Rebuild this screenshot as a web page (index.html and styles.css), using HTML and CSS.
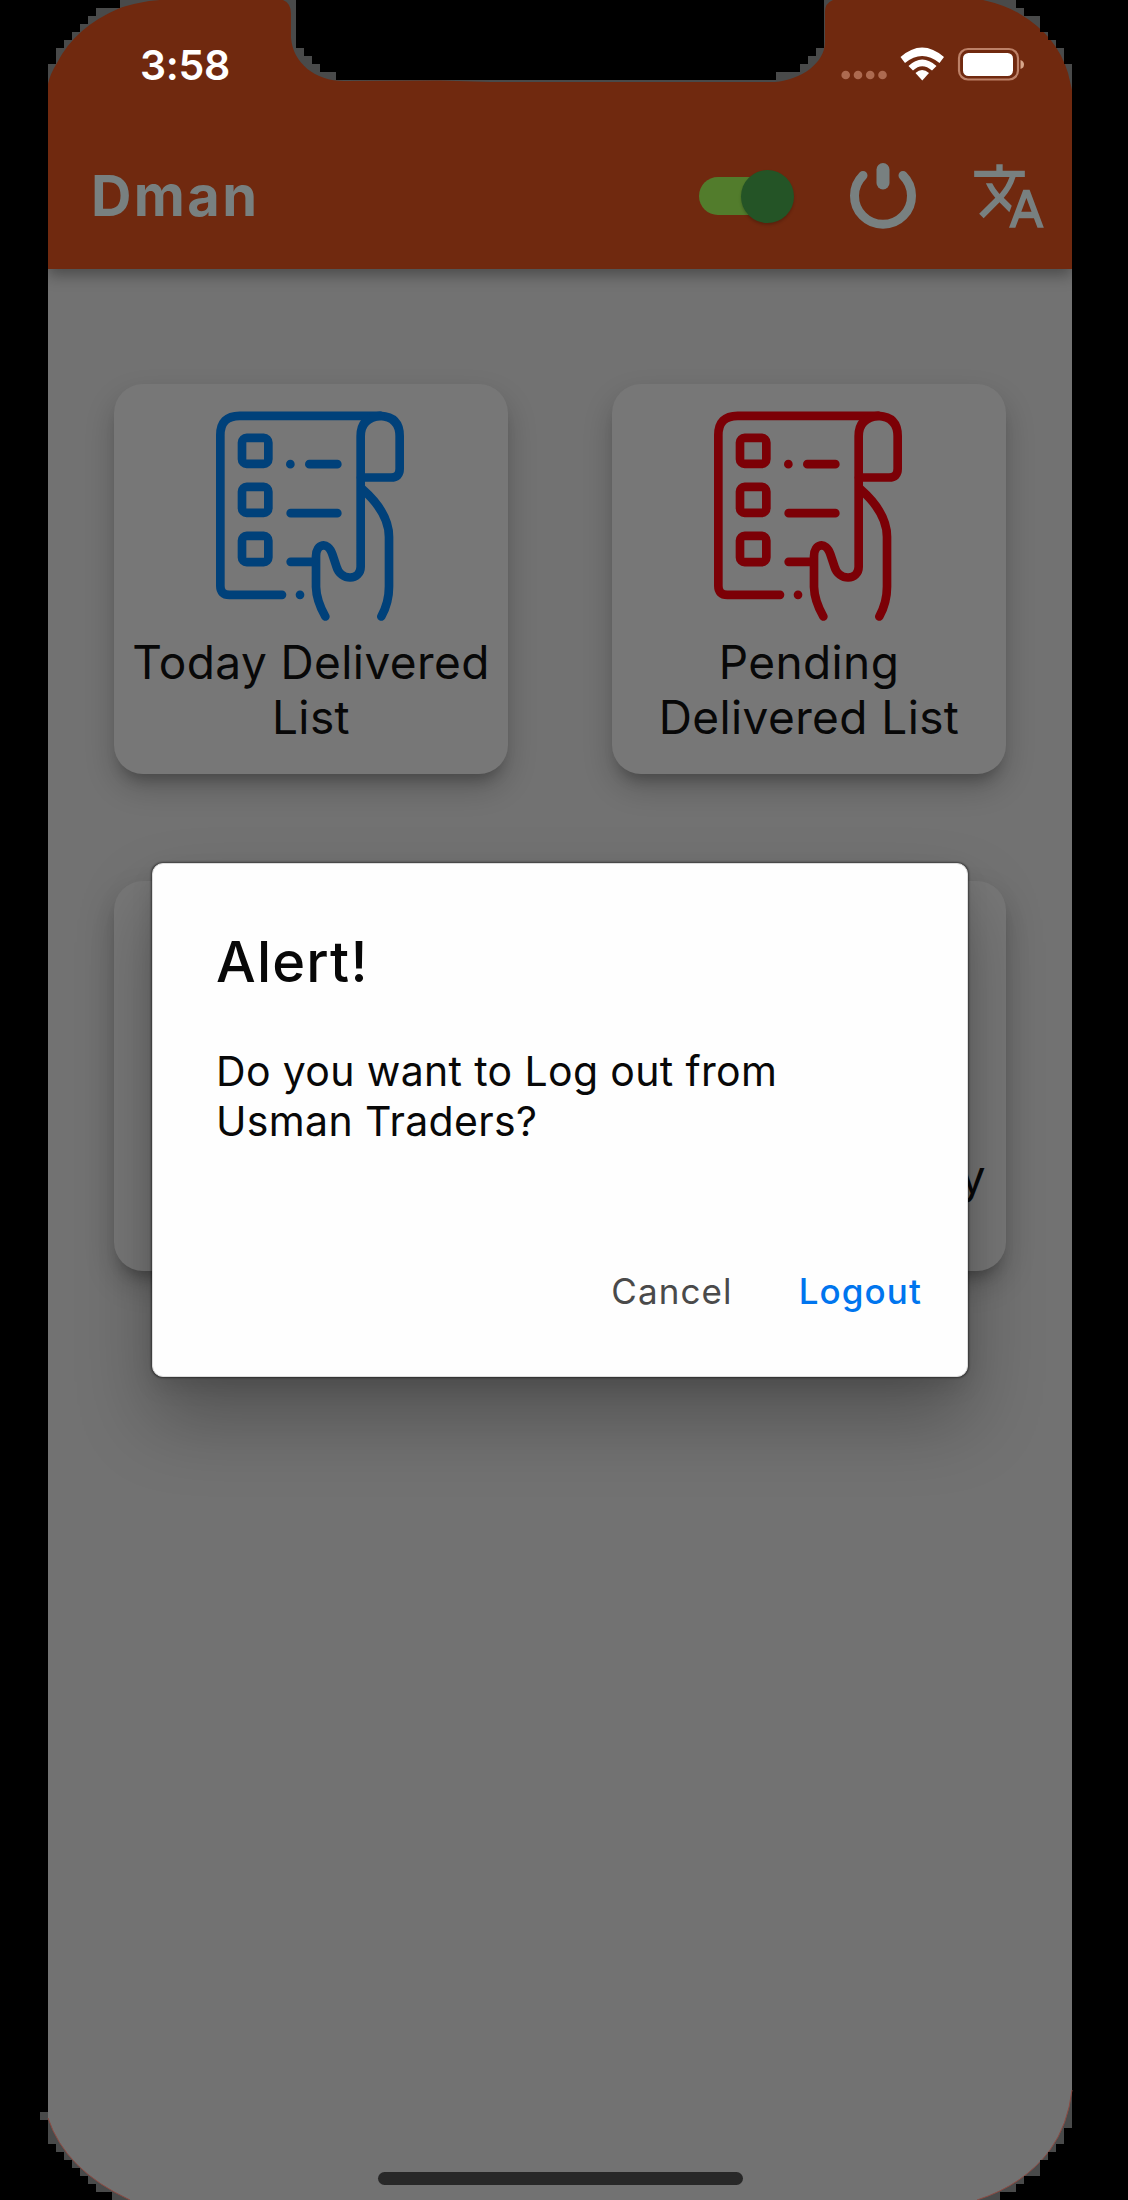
FILE: index.html
```html
<!DOCTYPE html>
<html lang="en">
<head>
<meta charset="utf-8">
<title>Dman</title>
<link rel="stylesheet" href="styles.css">
</head>
<body>
<svg class="defs" width="0" height="0">
  <symbol id="list" viewBox="380 150 570 635">
    <g fill="none" stroke="currentColor" stroke-width="26" stroke-linecap="round" stroke-linejoin="round">
      <path d="M578 704H420Q393 704 393 677V225Q393 167 451 167H873Q931 170 931 228V326Q931 352 905 352H815"/>
      <path d="M873 167Q814 172 814 228V620C814 661 755 665 741 618L729 582C715 541 680 552 680 588V680Q681 721 708 769"/>
      <path d="M818 386Q899 457 899 530V680Q899 728 876 769"/>
      <rect x="458" y="233" width="79" height="78" rx="14"/>
      <rect x="458" y="380" width="79" height="78" rx="14"/>
      <rect x="458" y="527" width="79" height="79" rx="14"/>
      <path d="M603 312h.1M660 312h84M604 459h140M604 605h70M632 704h.1"/>
    </g>
  </symbol>
</svg>
<div class="phone">
  <header class="header">
    <div class="status">
      <span class="time">3:58</span>
      <svg class="signals" width="180" height="36" viewBox="841 46 180 36">
        <g fill="#ad6a50"><circle cx="845.7" cy="75" r="4.3"/><circle cx="858" cy="75" r="4.3"/><circle cx="870.2" cy="75" r="4.3"/><circle cx="882.5" cy="75" r="4.3"/></g>
        <g fill="#fff">
          <path d="M900.5 57Q922 38 944 57L939.5 63Q922 49 905 63Z"/>
          <path d="M908.5 66Q922 53 936.500 66L932 70.500Q922 62 913 70.500Z"/>
          <path d="M915.500 73Q922 67 929 73L922.300 80.500Z"/>
        </g>
        <rect x="959" y="49" width="59" height="30.500" rx="9" fill="none" stroke="#bd8168" stroke-width="2.200"/>
        <rect x="963" y="53" width="50" height="23" rx="5.500" fill="#fff"/>
        <path d="M1020.500 60Q1024 61 1024 64.500T1020.500 69Z" fill="#d6a58a"/>
      </svg>
    </div>
    <div class="appbar">
      <h1 class="title">Dman</h1>
      <div class="toggle"><span class="thumb"></span></div>
      <svg class="power" width="68" height="68" viewBox="849 162 68 68" fill="none" stroke="#788080" stroke-linecap="round">
        <path d="M863 175.500A28.500 28.500 0 1 0 903 175.500" stroke-width="9"/>
        <path d="M883 169.500V183" stroke-width="13"/>
      </svg>
      <svg class="translate" width="76" height="76" viewBox="0 0 24 24" fill="#788080"><path d="M12.870 15.070l-2.540-2.510.03-.03A17.520 17.520 0 0 0 14.070 6H17V4h-7V2H8v2H1v1.990h11.170C11.500 7.920 10.440 9.750 9 11.350 8.070 10.320 7.300 9.190 6.690 8h-2c.73 1.630 1.730 3.170 2.980 4.560l-5.090 5.020L4 19l5-5 3.110 3.110.76-2.040zM18.500 10h-2L12 22h2l1.120-3h4.750L21 22h2l-4.500-12zm-2.620 7l1.620-4.330L19.120 17h-3.240z"/></svg>
    </div>
  </header>
  <main class="grid">
    <section class="card"><svg class="icon blue"><use href="#list"/></svg><p class="label">Today Delivered<br>List</p></section>
    <section class="card"><svg class="icon red"><use href="#list"/></svg><p class="label">Pending<br>Delivered List</p></section>
    <section class="card"></section>
    <section class="card end"><p class="label">y</p></section>
  </main>
  <div class="home"></div>

  <div class="dialog" role="dialog">
    <h2 class="alert">Alert!</h2>
    <p class="message">Do you want to Log out from<br>Usman Traders?</p>
    <div class="actions"><span class="cancel">Cancel</span><span class="logout">Logout</span></div>
  </div>

  <svg class="bezel" width="1040" height="2200" viewBox="40 0 1040 2200">
    <g fill="#494a4a">
      <path d="M48 0H160C145 1 132 4 120 8Q75 27 57 63Q50 74 48 84Z"/>
      <path d="M983 0Q1005 5 1020 14Q1057 36 1068 73L1072 90V0Z"/>
      <path d="M283 0Q291 3 291 14V38C293 63 315 81 344 81L440 80.500L490 82H775C801 80 825 63 825 42V12Q825 3 833 0Z"/>
      <path d="M40 2112H48V2118Q65 2170 130 2200H48V2120H40Z"/>
      <path d="M1072 2090Q1068 2125 1050 2150Q1024 2185 977 2200H1072Z"/>
    </g>
    <g fill="none" stroke="#8b4a42" stroke-width="1"><path d="M48 2118Q65 2170 130 2200M1072 2090Q1068 2125 1050 2150Q1024 2185 977 2200"/></g>
    <g fill="#000" shape-rendering="crispEdges">
      <path d="M48 0H120V8H96V16H88V24H80V32H72V40H64V48H56V64H48Z"/>
      <path d="M1072 0H1016V8H1024V16H1040V32H1048V40H1056V48H1064V64H1072Z"/>
      <path d="M296 0V48H304V56H312V64H320V72H336V80H776V72H800V64H808V56H816V48H824V0Z"/>
      <path d="M48 2144H56V2152H64V2160H72V2168H80V2176H88V2184H96V2192H112V2200H48Z"/>
      <path d="M1072 2128H1064V2144H1056V2152H1048V2160H1040V2176H1024V2184H1016V2192H1000V2200H1072Z"/>
    </g>
  </svg>
</div>
</body>
</html>
```
FILE: styles.css
```css
* { box-sizing: border-box; }
body { margin: 0; background: #000; font-family: Inter, "Liberation Sans", sans-serif; }
h1, h2, p { margin: 0; }
.defs { position: absolute; }
.phone { position: relative; width: 1024px; height: 2200px; margin-left: 48px; background: #727272; display: flex; flex-direction: column; }
.header { height: 269px; background: #70290f; box-shadow: 0 6px 14px rgba(0,0,0,.34); clip-path: inset(0 0 -40px 0); }
.status { height: 130px; padding: 46px 51px 0 92px; display: flex; justify-content: space-between; align-items: flex-start; }
.time { font-size: 41px; line-height: 38px; font-weight: 600; color: #fff; letter-spacing: -.3px; }
.signals { overflow: visible; }
.appbar { height: 132px; display: flex; align-items: center; padding: 0 25px 0 43px; }
.title { flex: 1; font-size: 56px; line-height: 66px; font-weight: 700; color: #788080; letter-spacing: 2.4px; }
.toggle { width: 95px; height: 38px; border-radius: 19px; background: linear-gradient(90deg, #527c2c 70px, transparent 70px); display: flex; align-items: center; justify-content: flex-end; }
.thumb { width: 53px; height: 53px; border-radius: 50%; background: #245426; box-shadow: 0 2px 3px rgba(0,0,0,.2); }
.power { margin-left: 55px; }
.translate { margin-left: 54px; }
.grid { display: grid; grid-template-columns: 394px 394px; grid-auto-rows: 390px; gap: 107px 104px; padding: 115px 66px 0; }
.card { background: #777; border-radius: 29px; box-shadow: 0 14px 30px rgba(0,0,0,.2), 0 12px 14px -7px rgba(0,0,0,.24); padding-top: 26px; display: flex; flex-direction: column; align-items: center; }
.icon { width: 190px; height: 212px; }
.blue { color: #00417a; }
.red { color: #7c0006; }
.label { margin-top: 13px; font-size: 46px; line-height: 55px; color: #080808; text-align: center; white-space: nowrap; letter-spacing: .4px; }
.end { align-items: flex-end; padding: 255px 20px 0 0; }
.home { margin: auto auto 15px; width: 365px; height: 13px; border-radius: 7px; background: #282828; }
.dialog { position: absolute; left: 104px; top: 863px; width: 816px; height: 514px; border-radius: 11px; background: #fefefe; border: 1px solid #ddd; box-shadow: 0 0 2px 1px rgba(0,0,0,.45), 0 42px 74px rgba(0,0,0,.28), 0 10px 26px -4px rgba(0,0,0,.14); padding: 64px 45px 0 63px; display: flex; flex-direction: column; }
.alert { font-size: 56px; line-height: 68px; font-weight: 500; color: #080808; letter-spacing: 1.2px; }
.message { margin-top: 50px; font-size: 41px; line-height: 50px; color: #080808; letter-spacing: .35px; white-space: nowrap; }
.actions { margin-top: 123px; display: flex; justify-content: flex-end; gap: 66px; font-size: 35px; line-height: 44px; letter-spacing: 1.1px; }
.cancel { color: #4a4a4a; }
.logout { color: #0075ee; font-weight: 500; }
.bezel { position: absolute; left: -8px; top: 0; }
```
